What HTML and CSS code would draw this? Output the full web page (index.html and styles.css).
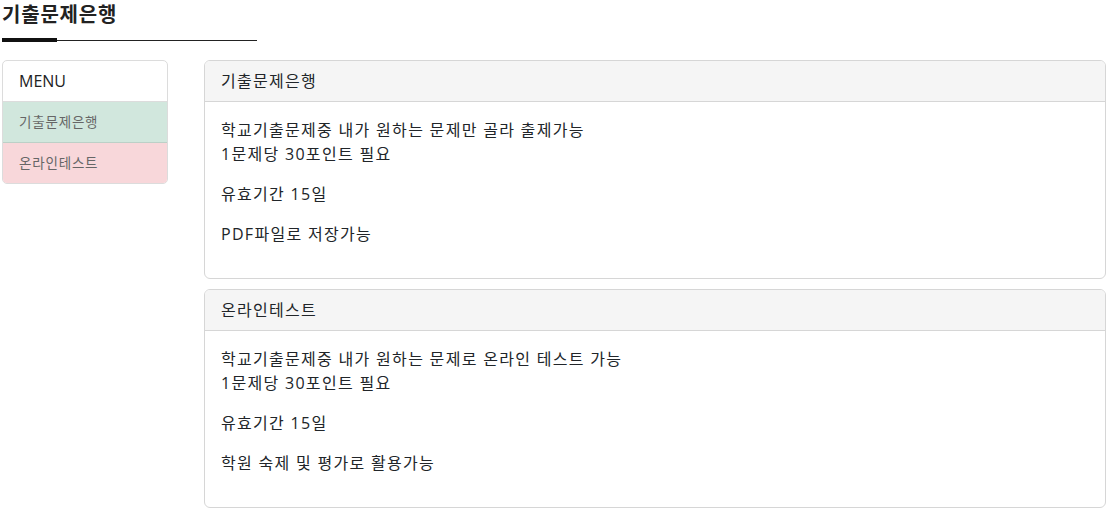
FILE: index.html
```html
<!DOCTYPE html>
<html lang="ko">
<head>
    <meta charset="UTF-8">
    <meta name="viewport" content="width=device-width, initial-scale=1.0">
    <title>기출문제은행</title>
    <link rel="stylesheet" href="styles.css">
</head>
<body>
    <div class="page-title">
        <h1>기출문제은행</h1>
        <div class="title-line"><span></span></div>
    </div>

    <div class="layout">
        <ul class="side-menu">
            <li class="menu-head">MENU</li>
            <li class="menu-item item-green">기출문제은행</li>
            <li class="menu-item item-red">온라인테스트</li>
        </ul>

        <div class="content">
            <div class="card">
                <div class="card-header">기출문제은행</div>
                <div class="card-body">
                    <p>학교기출문제중 내가 원하는 문제만 골라 출제가능<br>1문제당 30포인트 필요</p>
                    <p>유효기간 15일</p>
                    <p>PDF파일로 저장가능</p>
                </div>
            </div>

            <div class="card">
                <div class="card-header">온라인테스트</div>
                <div class="card-body">
                    <p>학교기출문제중 내가 원하는 문제로 온라인 테스트 가능<br>1문제당 30포인트 필요</p>
                    <p>유효기간 15일</p>
                    <p>학원 숙제 및 평가로 활용가능</p>
                </div>
            </div>
        </div>
    </div>
</body>
</html>
```

FILE: styles.css
```css
body {
    margin: 0;
    padding: 0 6px 0 2px;
    font-family: 'Open Sans', 'Noto Sans CJK KR', sans-serif;
    font-size: 16px;
    line-height: 1.5;
    color: #212529;
    background: #fff;
}

.page-title h1 {
    margin: 0;
    font-size: 20px;
    font-weight: bold;
    line-height: 30px;
    letter-spacing: 0.8px;
    color: #222;
}

.title-line {
    width: 255px;
    height: 1px;
    margin-top: 10px;
    background: #222;
    position: relative;
}

.title-line span {
    position: absolute;
    left: 0;
    top: -2px;
    width: 55px;
    height: 4px;
    background: #111;
}

.layout {
    display: flex;
    align-items: flex-start;
    gap: 36px;
    margin-top: 19px;
}

.side-menu {
    list-style: none;
    margin: 0;
    padding: 0;
    width: 166px;
    box-sizing: border-box;
    flex-shrink: 0;
    border: 1px solid #dcdcdc;
    border-radius: 5px;
    overflow: hidden;
}

.side-menu li {
    padding: 8px 16px;
    line-height: 24px;
}

.menu-head {
    font-size: 16px;
    color: #222;
    border-bottom: 1px solid #dcdcdc;
}

.menu-item {
    font-size: 13.5px;
    letter-spacing: 0.8px;
    color: #666;
}

.item-green {
    background: #d1e7dd;
    border-bottom: 1px solid #bcd0c7;
}

.item-red {
    background: #f8d7da;
}

.content {
    flex: 1;
}

.card {
    border: 1px solid #d6d6d6;
    border-radius: 6px;
    margin-bottom: 10px;
    overflow: hidden;
    letter-spacing: 1.3px;
}

.card-header {
    padding: 8px 16px;
    background: #f5f5f5;
    border-bottom: 1px solid #d6d6d6;
}

.card-body {
    padding: 16px;
}

.card-body p {
    margin: 0 0 16px;
}
```
